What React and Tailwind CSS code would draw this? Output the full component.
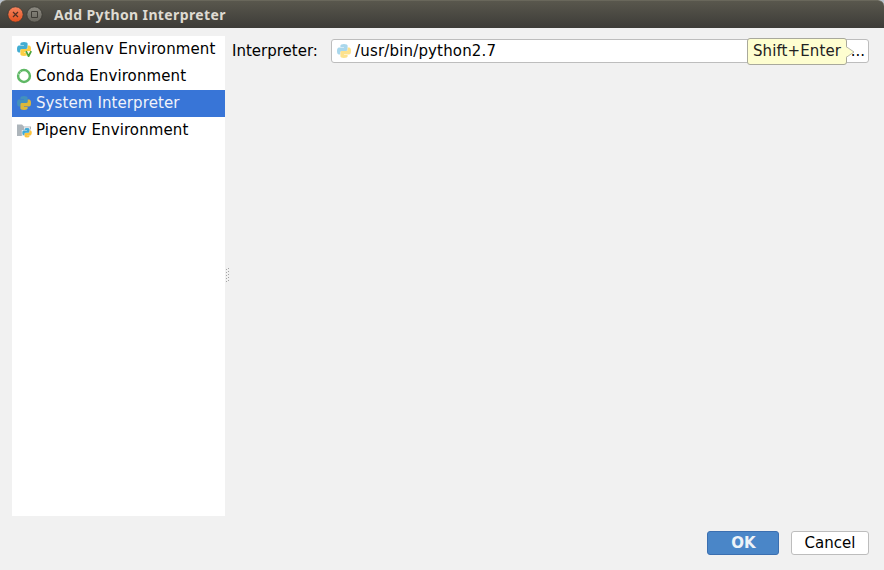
const PYTHON_TOP =
  "M4.4 2.7Q4.4 1 8 1t3.6 1.7V6.5Q11.6 7.9 10.2 7.9H6.2Q4.3 7.9 4.3 9.6v2H3Q1 11.6 1 8T3 4.4H8V4H4.4Z";

function Python({ top = "#3fa9d0", bottom = "#fcc92f", className = "" }) {
  return (
    <svg viewBox="0 0 16 16" className={`size-4 shrink-0 ${className}`}>
      <path d={PYTHON_TOP} fill={top} />
      <path d={PYTHON_TOP} fill={bottom} transform="rotate(180 8 8)" />
    </svg>
  );
}

function VirtualenvIcon() {
  return (
    <svg viewBox="0 0 16 16" className="-mt-px size-4 shrink-0">
      <path d={PYTHON_TOP} fill="#43add2" />
      <path d={PYTHON_TOP} fill="#fdcf45" transform="rotate(180 8 8)" />
      <path d="M9.2 10H16V16h-4.5Z" fill="#fff" opacity=".85" />
      <path d="m10 10.2 2.6 5 2.6-5" fill="none" stroke="#4ca53c" strokeWidth="1.8" />
    </svg>
  );
}

function CondaIcon() {
  return (
    <svg viewBox="0 0 16 16" className="-mt-px size-4 shrink-0">
      <circle cx="8" cy="8" r="5.9" fill="none" stroke="#5fb865" strokeWidth="2.5" />
      <path d="m3.4 2.7 2 2M1.6 5.8l2 .8" stroke="#fff" strokeWidth=".5" />
    </svg>
  );
}

function PipenvIcon() {
  return (
    <svg viewBox="0 0 16 16" className="-mt-px size-4 shrink-0">
      <path d="M1 2.5h5l2 2h7V14H1Z" fill="#adb5bb" />
      <path d="M8 5.3h6v2h2V16H8v-2H5.8V8H8Z" fill="#fff" opacity=".75" />
      <g transform="translate(5.6 5.4) scale(.68)">
        <path d={PYTHON_TOP} fill="#3faad7" />
        <path d={PYTHON_TOP} fill="#fcc43e" transform="rotate(180 8 8)" />
      </g>
    </svg>
  );
}

const ITEMS = [
  { label: "Virtualenv Environment", icon: <VirtualenvIcon /> },
  { label: "Conda Environment", icon: <CondaIcon /> },
  {
    label: "System Interpreter",
    icon: <Python top="#4391bd" bottom="#dcb83a" className="-mt-px" />,
    selected: true,
  },
  { label: "Pipenv Environment", icon: <PipenvIcon /> },
];

function TitleBar() {
  return (
    <header className="flex h-7 shrink-0 items-center rounded-t-md border-t border-[#69675b] bg-linear-to-b from-[#59574d] to-[#3d3c38] pl-[7px]">
      <svg viewBox="0 0 36 18" className="mt-px h-[18px] w-9 shrink-0">
        <defs>
          <linearGradient id="close" x2="0" y2="1">
            <stop stopColor="#f58560" />
            <stop offset="1" stopColor="#e3501d" />
          </linearGradient>
          <linearGradient id="max" x2="0" y2="1">
            <stop stopColor="#8d8b82" />
            <stop offset="1" stopColor="#66645c" />
          </linearGradient>
        </defs>
        <circle cx="8.5" cy="8.5" r="7.7" fill="url(#close)" stroke="#393731" strokeWidth=".8" />
        <path d="m6 6 5 5m0-5-5 5" stroke="#513024" strokeWidth="1.2" />
        <circle cx="27.5" cy="8.5" r="7.7" fill="url(#max)" stroke="#393731" strokeWidth=".8" />
        <path d="M24.5 5.5h6v6h-6Z" fill="none" stroke="#3e3c36" />
      </svg>
      <h1 className="ml-[11px] font-['Noto_Sans',sans-serif] text-[14px] leading-5 font-bold tracking-[0.38px] whitespace-nowrap text-[#dfdbd2]">
        Add Python Interpreter
      </h1>
    </header>
  );
}

function Splitter() {
  return (
    <svg viewBox="0 0 7 18" className="h-[18px] w-[7px] shrink-0 self-center">
      {[0, 1, 2, 3, 4].map((i) => (
        <g key={i} fill="#a6a6a6">
          <rect x="1" y={2 + i * 3} width="1" height="1" />
          <rect x="3" y={1 + i * 3} width="1" height="1" />
        </g>
      ))}
    </svg>
  );
}

export default function App() {
  return (
    <div className="h-[570px] w-[884px] bg-[#b9c2cc]">
      <div className="flex h-full flex-col rounded-t-md bg-[#f1f1f1] font-['DejaVu_Sans',sans-serif] text-[15px] leading-[18px] text-black">
        <TitleBar />
        <main className="flex h-[488px] pt-2 pl-3">
          <ul className="w-[213px] shrink-0 bg-white">
            {ITEMS.map(({ label, icon, selected }) => (
              <li
                key={label}
                className={`flex h-[27px] items-center gap-1 pl-1 tracking-[0.1px] whitespace-nowrap ${selected ? "bg-[#3875d7] text-[#f0f3fa]" : ""}`}
              >
                {icon}
                <span className="-mt-px">{label}</span>
              </li>
            ))}
          </ul>
          <Splitter />
          <div className="mt-[3px] flex h-6 flex-1 items-center pr-[15px]">
            <label className="w-[99px] shrink-0 whitespace-nowrap">Interpreter:</label>
            <div className="relative flex h-6 flex-1 items-center rounded-[3px] border border-[#bdbdbd] bg-white pl-1">
              <Python top="#a9d7ec" bottom="#fde28d" />
              <span className="ml-[3px] tracking-[0.17px]">/usr/bin/python2.7</span>
              <span className="ml-auto pr-[3px]">...</span>
              <div className="absolute -top-0.5 right-[21px] flex h-[27px] w-[100px] items-center justify-center rounded-[3px] border border-[#a9a99c] bg-[#fefed0] pb-0.5 tracking-[0.1px] whitespace-nowrap text-[#222]">
                Shift+Enter
                <svg viewBox="0 0 10 14" className="absolute top-[6px] -right-[9px] h-3.5 w-2.5">
                  <path d="M0 1 9 7 0 13Z" fill="#fefed0" />
                  <path d="m1 1.5 8 5.5-8 5.5" fill="none" stroke="#b9b9aa" />
                </svg>
              </div>
            </div>
          </div>
        </main>
        <footer className="mt-[15px] flex justify-end gap-3 pr-[15px]">
          <button className="h-6 w-[72px] rounded-[3px] border border-[#3b6fb0] bg-[#4a86c8] pl-px font-bold text-[#eef3f8]">
            OK
          </button>
          <button className="h-6 w-[78px] rounded-[3px] border border-[#bdbdbd] bg-white">Cancel</button>
        </footer>
      </div>
    </div>
  );
}
